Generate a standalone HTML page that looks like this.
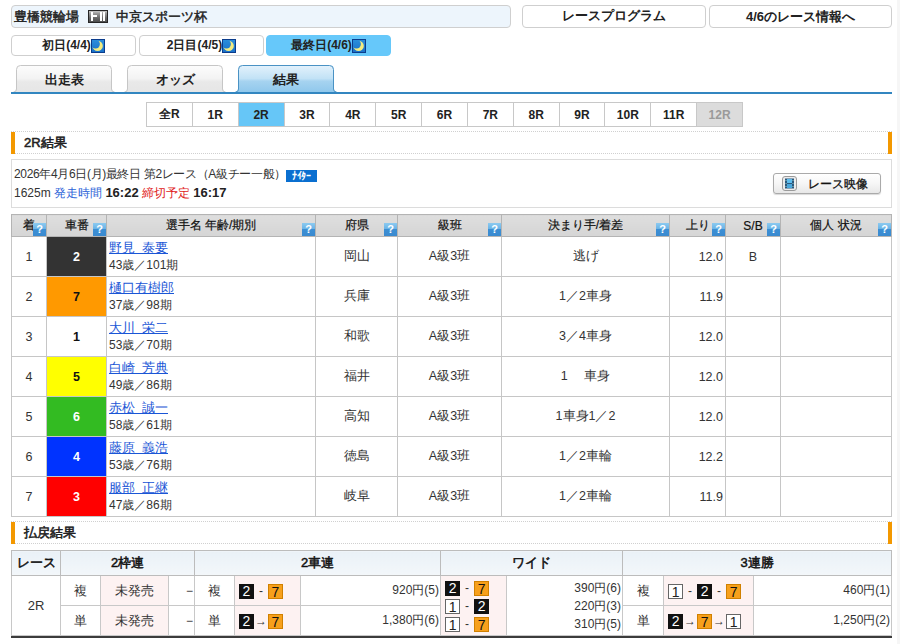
<!DOCTYPE html>
<html><head><meta charset="utf-8">
<style>
*{box-sizing:border-box;margin:0;padding:0}
html,body{width:900px;height:644px;overflow:hidden;background:#fff}
body{position:relative;font-family:"Liberation Sans",sans-serif;color:#333;font-size:12px}
.abs{position:absolute}
.box{position:absolute;border:1px solid #cfcfcf;border-radius:4px;background:#fff;text-align:center;font-weight:bold;color:#222}
#title{left:11px;top:5px;width:500px;height:23px;background:#edf5fc;text-align:left;font-size:13.3px;font-weight:normal;-webkit-text-stroke:0.45px #222;line-height:22px;padding-left:2px}
#prog{left:522px;top:5px;width:184px;height:23px;font-size:12.5px;line-height:21px}
#info{left:709px;top:5px;width:183px;height:23px;font-size:13px;line-height:21px}
.fii{display:inline-block;width:20px;height:13px;vertical-align:-2px;margin:0 8px 0 9px}
.day{top:35px;width:125px;height:21px;font-size:12px;line-height:19px}
.moon{display:inline-block;width:14px;height:14px;vertical-align:-4px;margin-left:0px}
.tab{position:absolute;top:65px;width:102px;height:27px;text-align:center;font-weight:bold;font-size:13px;line-height:27px;color:#222}
.tab svg{position:absolute;left:0;top:0}
.tab span{position:relative;top:1px}
#tabline{left:11px;top:92px;width:881px;height:2px;background:#3286c0}
#races{position:absolute;left:146px;top:102px;border-collapse:collapse;table-layout:fixed;width:597px}
#races td{height:24px;border:1px solid #c8c8c8;text-align:center;font-weight:bold;font-size:12px;color:#222;background:#fff}
#races td.on{background:#66c6f7}
#races td.off{background:#dcdcdc;color:#9a9a9a}
.sec{position:absolute;left:11px;width:881px;height:23px;border-top:1px dotted #d0d0d0;border-bottom:1px dotted #d0d0d0;font-weight:normal;-webkit-text-stroke:0.55px #222;font-size:13px;color:#222;line-height:21px;padding-left:13px}
.sec:before{content:"";position:absolute;left:0;top:0;width:4px;height:22px;background:#f39800}
.sec:after{content:"";position:absolute;right:0;top:0;width:4px;height:22px;background:#f39800}
#infobox{left:11px;top:159px;width:881px;height:49px;border:1px solid #dcdcdc;color:#333;font-size:12px;padding-left:2px}
#infobox .l1{position:absolute;left:2px;top:7px;line-height:14px;letter-spacing:-0.35px}
#infobox .l2{position:absolute;left:2px;top:26px;line-height:14px}
.naita{display:inline-block;width:31px;height:12px;background:#0a6fd0;color:#fff;font-size:10px;letter-spacing:0;line-height:12px;text-align:center;vertical-align:-1px;margin-left:0px;font-weight:bold;letter-spacing:-0.5px}
.blue{color:#2a62d8}
.red{color:#e02020}
.b{font-weight:bold;color:#222;font-size:13px}
#video{left:773px;top:173px;width:108px;height:21px;border:1px solid #aaa;border-radius:3px;background:linear-gradient(#fff,#f6f6f6 50%,#e8e8e8);font-size:13px;line-height:19px;color:#222;box-shadow:0 1px 1px rgba(0,0,0,.15)}
.film{position:absolute;left:8px;top:2px}
table.res{position:absolute;left:11px;top:214px;border-collapse:collapse;width:881px;table-layout:fixed;font-size:12px;color:#333}
table.res th{height:22px;background:linear-gradient(#dedede,#d5d5d5);border:1px solid #b4b4b4;font-weight:normal;-webkit-text-stroke:0.2px #111;color:#111;position:relative;font-size:12px}
table.res td{height:40px;border:1px solid #c6c6c6;text-align:center;font-size:12.5px}
.q{-webkit-text-stroke:0;position:absolute;right:0;bottom:0;width:13px;height:13px;background:linear-gradient(#8ccaf0,#6ab3e6 45%,#3c8fd4 50%,#3a8ad0);color:#fff;font-size:11px;line-height:13px;text-align:center;font-weight:bold}
td.name{text-align:left!important;padding-left:2px;line-height:17px;font-size:12px!important}
td.name .sp{letter-spacing:-6px}
td.name a{font-size:13px;color:#1a56d6;text-decoration:underline}
td.ag{text-align:right!important;padding-right:2px}
.w1{background:#fff;color:#111;font-weight:bold}
.w2{background:#333;color:#fff;font-weight:bold}
.w3{background:#ff0000;color:#fff;font-weight:bold}
.w4{background:#0033ff;color:#fff;font-weight:bold}
.w5{background:#ffff00;color:#111;font-weight:bold}
.w6{background:#33bb22;color:#fff;font-weight:bold}
.w7{background:#ff9900;color:#111;font-weight:bold}
table.pay{position:absolute;left:11px;top:550px;border-collapse:collapse;width:881px;table-layout:fixed;font-size:13px;color:#333}
table.pay th{height:25px;background:linear-gradient(#eaf1f7,#f3f7fa);border:1px solid #bcbcbc;font-weight:normal;-webkit-text-stroke:0.5px #111;color:#111;font-size:13px}
table.pay td{height:30px;border:1px solid #c8c8c8;text-align:center}
table.pay{box-shadow:0 2px 0 #3c3c3c}
.pk{background:#fdf2f2}
.yen{text-align:right!important;padding-right:1px;font-size:12px}
.ds,.ar{display:inline-block;width:14px;text-align:center;vertical-align:middle;font-size:12px}
.nb{display:inline-block;width:15px;height:15px;line-height:15px;font-size:14px;text-align:center;vertical-align:middle}
.nb.k{background:#111;color:#fff}
.nb.o{background:#f7a01c;color:#111;border:1px solid #d08000}
td.wide div{height:18px;line-height:18px}
td.cmb{text-align:left!important;padding-left:4px}
.nb.wt{background:#fff;color:#222;border:1px solid #666}
</style></head><body>

<svg width="0" height="0" style="position:absolute"><defs><linearGradient id="mg" x1="0" y1="0" x2="0" y2="1"><stop offset="0" stop-color="#2a8fdc"/><stop offset="1" stop-color="#1a70c8"/></linearGradient><mask id="mm" maskUnits="userSpaceOnUse" x="0" y="0" width="14" height="14"><rect width="14" height="14" fill="#fff"/><circle cx="4.5" cy="5.1" r="4.4" fill="#000"/></mask></defs></svg>
<div id="title" class="box">豊橋競輪場<svg class="fii" width="20" height="13" viewBox="0 0 20 13"><defs><linearGradient id="fg" x1="0" y1="0" x2="0" y2="1"><stop offset="0" stop-color="#d0d0d0"/><stop offset="0.25" stop-color="#9a9a9a"/><stop offset="0.6" stop-color="#6a6a6a"/><stop offset="1" stop-color="#4a4a4a"/></linearGradient></defs><rect x="0.5" y="0.5" width="19" height="12" fill="url(#fg)" stroke="#262626"/><rect x="3" y="2" width="2" height="9" fill="#fff"/><rect x="3" y="5" width="6" height="2" fill="#fff"/><rect x="12" y="2" width="2" height="9" fill="#fff"/><rect x="15" y="2" width="2" height="9" fill="#fff"/></svg>中京スポーツ杯</div>
<div id="prog" class="box">レースプログラム</div>
<div id="info" class="box">4/6のレース情報へ</div>

<div class="box day" style="left:11px">初日(4/4)<svg class="moon" width="14" height="14" viewBox="0 0 14 14"><rect x="0.5" y="0.5" width="13" height="13" fill="url(#mg)" stroke="#0b3c8c"/><circle cx="6.6" cy="6.9" r="5.2" fill="#f3ec80" mask="url(#mm)"/></svg></div>
<div class="box day" style="left:139px">2日目(4/5)<svg class="moon" width="14" height="14" viewBox="0 0 14 14"><rect x="0.5" y="0.5" width="13" height="13" fill="url(#mg)" stroke="#0b3c8c"/><circle cx="6.6" cy="6.9" r="5.2" fill="#f3ec80" mask="url(#mm)"/></svg></div>
<div class="box day" style="left:266px;background:#66c8fa;border-color:#66c8fa">最終日(4/6)<svg class="moon" width="14" height="14" viewBox="0 0 14 14"><rect x="0.5" y="0.5" width="13" height="13" fill="url(#mg)" stroke="#0b3c8c"/><circle cx="6.6" cy="6.9" r="5.2" fill="#f3ec80" mask="url(#mm)"/></svg></div>

<svg width="0" height="0" style="position:absolute"><defs><linearGradient id="tg0" x1="0" y1="0" x2="0" y2="1"><stop offset="0" stop-color="#fdfdfd"/><stop offset="0.5" stop-color="#f3f3f3"/><stop offset="0.62" stop-color="#e9e9e9"/><stop offset="1" stop-color="#e6e6e6"/></linearGradient><linearGradient id="tg1" x1="0" y1="0" x2="0" y2="1"><stop offset="0" stop-color="#e4f2fc"/><stop offset="0.5" stop-color="#c2e2f6"/><stop offset="0.6" stop-color="#a6d3f0"/><stop offset="1" stop-color="#90c8ec"/></linearGradient></defs></svg>
<div class="tab" style="left:13px"><svg width="102" height="27" viewBox="0 0 102 27"><path d="M0,27 Q3,27 3,24 L3,4 Q3,0 7,0 L95,0 Q99,0 99,4 L99,24 Q99,27 102,27 Z" fill="url(#tg0)"/><path d="M0.5,27 Q3.5,27 3.5,24 L3.5,4.5 Q3.5,0.5 7.5,0.5 L94.5,0.5 Q98.5,0.5 98.5,4.5 L98.5,24 Q98.5,27 101.5,27" fill="none" stroke="#c6c6c6"/></svg><span>出走表</span></div>
<div class="tab" style="left:124px"><svg width="102" height="27" viewBox="0 0 102 27"><path d="M0,27 Q3,27 3,24 L3,4 Q3,0 7,0 L95,0 Q99,0 99,4 L99,24 Q99,27 102,27 Z" fill="url(#tg0)"/><path d="M0.5,27 Q3.5,27 3.5,24 L3.5,4.5 Q3.5,0.5 7.5,0.5 L94.5,0.5 Q98.5,0.5 98.5,4.5 L98.5,24 Q98.5,27 101.5,27" fill="none" stroke="#c6c6c6"/></svg><span>オッズ</span></div>
<div class="tab" style="left:235px"><svg width="102" height="27" viewBox="0 0 102 27"><path d="M0,27 Q3,27 3,24 L3,4 Q3,0 7,0 L95,0 Q99,0 99,4 L99,24 Q99,27 102,27 Z" fill="url(#tg1)"/><path d="M0.5,27 Q3.5,27 3.5,24 L3.5,4.5 Q3.5,0.5 7.5,0.5 L94.5,0.5 Q98.5,0.5 98.5,4.5 L98.5,24 Q98.5,27 101.5,27" fill="none" stroke="#4a92c4"/></svg><span>結果</span></div>
<div id="tabline" class="abs"></div>

<table id="races"><tr>
<td>全R</td><td>1R</td><td class="on">2R</td><td>3R</td><td>4R</td><td>5R</td><td>6R</td><td>7R</td><td>8R</td><td>9R</td><td>10R</td><td>11R</td><td class="off">12R</td>
</tr></table>

<div class="sec" style="top:131px">2R結果</div>

<div id="infobox" class="abs">
<div class="l1">2026年4月6日(月)最終日 第2レース（A級チー一般）<span class="naita">ﾅｲﾀｰ</span></div>
<div class="l2">1625m <span class="blue">発走時間</span> <span class="b">16:22</span> <span class="red">締切予定</span> <span class="b">16:17</span></div>
</div>
<div id="video" class="box"><svg class="film" width="15" height="15" viewBox="0 0 15 15"><rect x="0.5" y="0.5" width="14" height="14" rx="2.5" fill="#ececec" stroke="#9a9a9a"/><rect x="3" y="2.5" width="9" height="10" fill="#2c587c"/><rect x="5" y="3" width="5" height="4" fill="#5cbdee"/><rect x="5" y="8" width="5" height="4" fill="#4aa8dc"/><rect x="3.5" y="4" width="1" height="1" fill="#9cc"/><rect x="3.5" y="7" width="1" height="1" fill="#9cc"/><rect x="3.5" y="10" width="1" height="1" fill="#9cc"/><rect x="10.5" y="4" width="1" height="1" fill="#9cc"/><rect x="10.5" y="7" width="1" height="1" fill="#9cc"/><rect x="10.5" y="10" width="1" height="1" fill="#9cc"/></svg><span style="padding-left:21px;font-weight:normal;-webkit-text-stroke:0.3px #111;font-size:12px;color:#111">レース映像</span></div>

<table class="res">
<colgroup><col style="width:35px"><col style="width:60px"><col style="width:209px"><col style="width:82px"><col style="width:104px"><col style="width:168px"><col style="width:56px"><col style="width:55px"><col></colgroup>
<tr>
<th>着<span class="q">?</span></th>
<th>車番<span class="q">?</span></th>
<th>選手名 年齢/期別<span class="q">?</span></th>
<th>府県<span class="q">?</span></th>
<th>級班<span class="q">?</span></th>
<th>決まり手/着差<span class="q">?</span></th>
<th>上り<span class="q">?</span></th>
<th>S/B<span class="q">?</span></th>
<th>個人 状況<span class="q">?</span></th>
</tr>
<tr><td>1</td><td class="w2">2</td><td class="name"><a>野見<span class="sp">　</span>泰要</a><br>43歳／101期</td><td>岡山</td><td>A級3班</td><td>逃げ</td><td class="ag">12.0</td><td>B</td><td></td></tr>
<tr><td>2</td><td class="w7">7</td><td class="name"><a>樋口有樹郎</a><br>37歳／98期</td><td>兵庫</td><td>A級3班</td><td>1／2車身</td><td class="ag">11.9</td><td></td><td></td></tr>
<tr><td>3</td><td class="w1">1</td><td class="name"><a>大川<span class="sp">　</span>栄二</a><br>53歳／70期</td><td>和歌</td><td>A級3班</td><td>3／4車身</td><td class="ag">12.0</td><td></td><td></td></tr>
<tr><td>4</td><td class="w5">5</td><td class="name"><a>白崎<span class="sp">　</span>芳典</a><br>49歳／86期</td><td>福井</td><td>A級3班</td><td>1 　車身</td><td class="ag">12.0</td><td></td><td></td></tr>
<tr><td>5</td><td class="w6">6</td><td class="name"><a>赤松<span class="sp">　</span>誠一</a><br>58歳／61期</td><td>高知</td><td>A級3班</td><td>1車身1／2</td><td class="ag">12.0</td><td></td><td></td></tr>
<tr><td>6</td><td class="w4">4</td><td class="name"><a>藤原<span class="sp">　</span>義浩</a><br>53歳／76期</td><td>徳島</td><td>A級3班</td><td>1／2車輪</td><td class="ag">12.2</td><td></td><td></td></tr>
<tr><td>7</td><td class="w3">3</td><td class="name"><a>服部<span class="sp">　</span>正継</a><br>47歳／86期</td><td>岐阜</td><td>A級3班</td><td>1／2車輪</td><td class="ag">11.9</td><td></td><td></td></tr>
</table>

<div class="sec" style="top:521px">払戻結果</div>

<table class="pay">
<colgroup><col style="width:49px"><col style="width:40px"><col style="width:68px"><col style="width:26px"><col style="width:40px"><col style="width:66px"><col style="width:140px"><col style="width:66px"><col style="width:116px"><col style="width:41px"><col style="width:90px"><col></colgroup>
<tr>
<th>レース</th>
<th colspan="3">2枠連</th>
<th colspan="3">2車連</th>
<th colspan="2">ワイド</th>
<th colspan="3">3連勝</th>
</tr>
<tr>
<td rowspan="2">2R</td>
<td>複</td><td class="pk">未発売</td><td class="yen">−</td>
<td>複</td><td class="pk cmb"><span class="nb k">2</span><span class="ds">-</span><span class="nb o">7</span></td><td class="yen">920円(5)</td>
<td rowspan="2" class="pk cmb wide"><div><span class="nb k">2</span><span class="ds">-</span><span class="nb o">7</span></div><div><span class="nb wt">1</span><span class="ds">-</span><span class="nb k">2</span></div><div><span class="nb wt">1</span><span class="ds">-</span><span class="nb o">7</span></div></td>
<td rowspan="2" class="yen wide"><div>390円(6)</div><div>220円(3)</div><div>310円(5)</div></td>
<td>複</td><td class="pk cmb"><span class="nb wt">1</span><span class="ds">-</span><span class="nb k">2</span><span class="ds">-</span><span class="nb o">7</span></td><td class="yen">460円(1)</td>
</tr>
<tr class="last">
<td>単</td><td class="pk">未発売</td><td class="yen">−</td>
<td>単</td><td class="pk cmb"><span class="nb k">2</span><span class="ar">→</span><span class="nb o">7</span></td><td class="yen">1,380円(6)</td>
<td>単</td><td class="pk cmb"><span class="nb k">2</span><span class="ar">→</span><span class="nb o">7</span><span class="ar">→</span><span class="nb wt">1</span></td><td class="yen">1,250円(2)</td>
</tr>
</table>

<div style="position:absolute;left:897px;top:0;width:3px;height:644px;background:#f6f6f6"></div>
</body></html>
